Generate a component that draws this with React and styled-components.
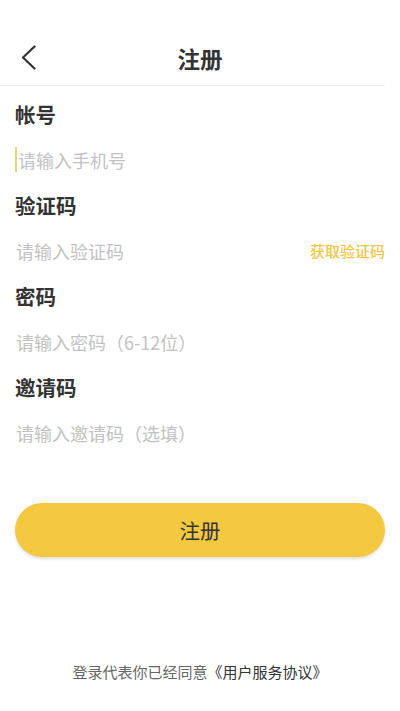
import React from 'react';
import styled, { createGlobalStyle } from 'styled-components';

const GlobalStyle = createGlobalStyle`
	body {
		margin: 0;
		background: #fff;
		font-family: 'Noto Sans CJK SC', 'Noto Sans', sans-serif;
		color: #333;
	}
	* {
		box-sizing: border-box;
	}
`;

const fields = [
	{ label: '帐号', placeholder: '请输入手机号', focused: true },
	{ label: '验证码', placeholder: '请输入验证码', action: '获取验证码' },
	{ label: '密码', placeholder: '请输入密码（6-12位）', type: 'password' },
	{ label: '邀请码', placeholder: '请输入邀请码（选填）' },
];

export default function App() {
	return (
		<>
			<GlobalStyle />
			<Page>
				<NavBar>
					<BackButton aria-label='返回'>
						<svg width='16' height='26' viewBox='0 0 16 26' fill='none'>
							<polyline
								points='13.5,1.5 2,12.5 13.5,23.5'
								stroke='#333'
								strokeWidth='2.2'
								strokeLinecap='round'
								strokeLinejoin='round'
							/>
						</svg>
					</BackButton>
					<Title>注册</Title>
				</NavBar>
				<Divider />

				<Form>
					{fields.map((f) => (
						<Field key={f.label}>
							<Label>{f.label}</Label>
							<InputRow>
								{f.focused && <Caret />}
								<Input type={f.type ?? 'text'} placeholder={f.placeholder} />
								{f.action && <CodeButton>{f.action}</CodeButton>}
							</InputRow>
						</Field>
					))}
				</Form>

				<SubmitButton>注册</SubmitButton>

				<Footer>
					登录代表你已经同意<strong>《用户服务协议》</strong>
				</Footer>
			</Page>
		</>
	);
}

const Page = styled.div`
	min-height: 100vh;
	display: flex;
	flex-direction: column;
	padding: 30px 15px 0 15px;
`;

const NavBar = styled.div`
	position: relative;
	height: 55px;
	margin: 0 -15px;
	display: flex;
	align-items: center;
	justify-content: center;
`;

const Divider = styled.div`
	height: 1px;
	margin: 0 0 0 -15px;
	background: #ececec;
`;

const BackButton = styled.button`
	position: absolute;
	left: 21px;
	top: 15px;
	padding: 0;
	border: none;
	background: transparent;
	display: flex;
	cursor: pointer;
`;

const Title = styled.h1`
	margin: 0;
	font-size: 22.5px;
	font-weight: 700;
	color: #333;
	line-height: 1;
	padding-top: 2px;
`;

const Form = styled.div`
	display: flex;
	flex-direction: column;
	padding-top: 13px;
`;

const Field = styled.div`
	display: flex;
	flex-direction: column;
`;

const Label = styled.div`
	height: 30px;
	line-height: 30px;
	font-size: 20.5px;
	font-weight: 700;
	color: #333;
`;

const InputRow = styled.div`
	height: 61px;
	display: flex;
	align-items: center;
`;

const Caret = styled.span`
	width: 2px;
	height: 25px;
	background: #efd27a;
	flex-shrink: 0;
`;

const Input = styled.input`
	flex: 1;
	min-width: 0;
	border: none;
	outline: none;
	padding: 0 0 0 1px;
	font-family: inherit;
	font-size: 18px;
	color: #333;
	background: transparent;
	&::placeholder {
		color: #c2c2c2;
	}
`;

const CodeButton = styled.span`
	font-size: 15px;
	font-weight: 500;
	color: #f2c645;
	white-space: nowrap;
	cursor: pointer;
`;

const SubmitButton = styled.button`
	margin-top: 40px;
	height: 54px;
	width: 100%;
	border: none;
	border-radius: 27px;
	background: #f5c842;
	box-shadow: 0 2px 3px rgba(0, 0, 0, 0.12);
	font-family: inherit;
	font-size: 20.5px;
	color: #333;
	cursor: pointer;
`;

const Footer = styled.p`
	margin: auto 0 0 0;
	padding-bottom: 29px;
	text-align: center;
	font-size: 15px;
	line-height: 20px;
	color: #666;
	strong {
		font-weight: 400;
		color: #333;
	}
`;
